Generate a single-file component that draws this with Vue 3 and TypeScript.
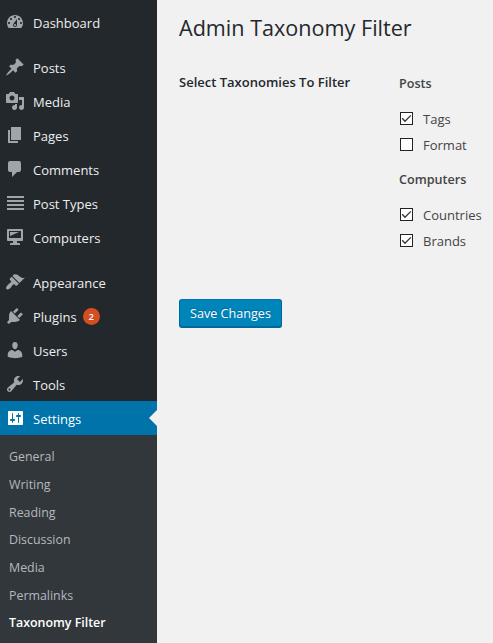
<script setup lang="ts">
import { reactive } from 'vue'

interface MenuItem {
  label: string
  icon: string
  count?: number
  current?: boolean
}

interface Group {
  title: string
  options: { label: string; checked: boolean }[]
}

const sections: MenuItem[][] = [
  [
    { label: 'Dashboard', icon: 'M3.76 16h12.48c1.1-1.37 1.76-3.11 1.76-5 0-4.42-3.58-8-8-8s-8 3.58-8 8c0 1.89.66 3.63 1.76 5zM10 4c.55 0 1 .45 1 1s-.45 1-1 1-1-.45-1-1 .45-1 1-1zM6 6c.55 0 1 .45 1 1s-.45 1-1 1-1-.45-1-1 .45-1 1-1zm8 0c.55 0 1 .45 1 1s-.45 1-1 1-1-.45-1-1 .45-1 1-1zm-5.37 5.55L12 7v6c0 1.1-.9 2-2 2s-2-.9-2-2c0-.57.24-1.08.63-1.45zM4 10c.55 0 1 .45 1 1s-.45 1-1 1-1-.45-1-1 .45-1 1-1zm12 0c.55 0 1 .45 1 1s-.45 1-1 1-1-.45-1-1 .45-1 1-1zm-5 3c0-.55-.45-1-1-1s-1 .45-1 1 .45 1 1 1 1-.45 1-1z' },
  ],
  [
    { label: 'Posts', icon: 'M10.44 3.02l1.82-1.82 6.36 6.35-1.83 1.82c-1.05-.68-2.48-.57-3.41.36l-.75.75c-.92.93-1.04 2.35-.35 3.41l-1.83 1.82-2.41-2.41-2.8 2.79c-.42.42-3.38 2.71-3.8 2.29s1.86-3.39 2.28-3.81l2.79-2.79L4.1 9.36l1.83-1.82c1.05.69 2.48.57 3.4-.36l.75-.75c.93-.92 1.05-2.35.36-3.41z' },
    { label: 'Media', icon: 'M13 11V4c0-.55-.45-1-1-1h-1.67L9 1H5L3.67 3H2c-.55 0-1 .45-1 1v7c0 .55.45 1 1 1h10c.55 0 1-.45 1-1zM7 4.5c1.38 0 2.5 1.12 2.5 2.5S8.38 9.5 7 9.5 4.5 8.38 4.5 7 5.62 4.5 7 4.5zM14 6h5v10.5c0 1.38-1.12 2.5-2.5 2.5S14 17.88 14 16.5s1.12-2.5 2.5-2.5c.17 0 .34.02.5.05V9h-3V6zm-4 8.05V13h2v3.5c0 1.38-1.12 2.5-2.5 2.5S7 17.88 7 16.5 8.12 14 9.5 14c.17 0 .34.02.5.05z' },
    { label: 'Pages', icon: 'M6 15V2h10v13H6zm-1 1h8v2H3V5h2v11z' },
    { label: 'Comments', icon: 'M5 2h9c1.1 0 2 .9 2 2v7c0 1.1-.9 2-2 2h-2l-5 5v-5H5c-1.1 0-2-.9-2-2V4c0-1.1.9-2 2-2z' },
    { label: 'Post Types', icon: 'M2 3h17v2H2zM2 7h17v2H2zM2 11h17v2H2zM2 15h17v2H2z' },
    { label: 'Computers', icon: 'M3 2h14c.55 0 1 .45 1 1v10c0 .55-.45 1-1 1h-5v2h2c.55 0 1 .45 1 1v1H5v-1c0-.55.45-1 1-1h2v-2H3c-.55 0-1-.45-1-1V3c0-.55.45-1 1-1zm13 9V4H4v7h12zM5 5h9L5 9V5z' },
  ],
  [
    { label: 'Appearance', icon: 'M14.48 11.06L7.41 3.99l1.5-1.5c.5-.56 2.3-.47 3.51.32 1.21.8 1.43 1.28 2.91 2.1 1.18.64 2.45 1.26 4.45.85zm-.71.71L6.7 4.7 4.93 6.47c-.39.39-.39 1.02 0 1.41l1.06 1.06c.39.39.39 1.03 0 1.42-.6.6-1.43 1.11-2.21 1.69-.35.26-.7.53-1.01.84C1.43 14.23.4 16.08 1.4 17.07c.99 1 2.84-.03 4.18-1.36.31-.31.58-.66.85-1.02.57-.78 1.08-1.61 1.69-2.21.39-.39 1.02-.39 1.41 0l1.06 1.06c.39.39 1.02.39 1.41 0z' },
    { label: 'Plugins', count: 2, icon: 'M13.11 4.36L9.87 7.6 8 5.73l3.24-3.24c.35-.34 1.05-.2 1.56.32.52.51.66 1.21.31 1.55zm-8 1.77l.91-1.12 9.01 9.01-1.19.84c-.71.71-2.63 1.16-3.82 1.16H6.14L4.9 17.26c-.59.59-1.54.59-2.12 0-.59-.58-.59-1.53 0-2.12l1.24-1.24v-3.88c0-1.13.4-3.19 1.09-3.89zm7.26 3.97l3.24-3.24c.34-.35 1.04-.21 1.55.31.52.51.66 1.21.31 1.55l-3.24 3.25z' },
    { label: 'Users', icon: 'M10 9.25c-2.27 0-2.73-3.44-2.73-3.44C7 4.02 7.82 2 9.97 2c2.16 0 2.98 2.02 2.71 3.81 0 0-.41 3.44-2.68 3.44zm0 2.57L12.72 10c2.39 0 4.52 2.33 4.52 4.53v2.49s-3.65 1.13-7.24 1.13c-3.65 0-7.24-1.13-7.24-1.13v-2.49c0-2.25 1.94-4.48 4.47-4.48z' },
    { label: 'Tools', icon: 'M16.68 9.77c-1.34 1.34-3.3 1.67-4.95.99l-5.41 6.52c-.99.99-2.59.99-3.58 0s-.99-2.59 0-3.57l6.52-5.42c-.68-1.65-.35-3.61.99-4.95 1.28-1.28 3.12-1.62 4.72-1.06l-2.89 2.89 2.82 2.82 2.86-2.87c.53 1.58.18 3.39-1.08 4.65zM3.81 16.21c.4.39 1.04.39 1.43 0 .4-.4.4-1.04 0-1.43-.39-.4-1.03-.4-1.43 0-.39.39-.39 1.03 0 1.43z' },
    { label: 'Settings', current: true, icon: 'M18 16V4c0-.55-.45-1-1-1H3.6c-.3 0-.6.3-.6.6v12.8c0 .3.3.6.6.6H17c.55 0 1-.45 1-1zM8 11h1c.55 0 1 .45 1 1s-.45 1-1 1H8v1.5c0 .28-.22.5-.5.5s-.5-.22-.5-.5V13H6c-.55 0-1-.45-1-1s.45-1 1-1h1V5.5c0-.28.22-.5.5-.5s.5.22.5.5V11zm5-2h-1c-.55 0-1-.45-1-1s.45-1 1-1h1V5.5c0-.28.22-.5.5-.5s.5.22.5.5V7h1c.55 0 1 .45 1 1s-.45 1-1 1h-1v5.5c0 .28-.22.5-.5.5s-.5-.22-.5-.5V9z' },
  ],
]

const submenu = ['General', 'Writing', 'Reading', 'Discussion', 'Media', 'Permalinks', 'Taxonomy Filter']
const activeSub = 'Taxonomy Filter'

const groups = reactive<Group[]>([
  { title: 'Posts', options: [{ label: 'Tags', checked: true }, { label: 'Format', checked: false }] },
  { title: 'Computers', options: [{ label: 'Countries', checked: true }, { label: 'Brands', checked: true }] },
])
</script>

<template>
  <div class="admin">
    <nav class="sidebar">
      <ul v-for="(section, i) in sections" :key="i" class="section">
        <li v-for="item in section" :key="item.label" class="item" :class="{ current: item.current }">
          <svg class="icon" viewBox="0 0 20 20" aria-hidden="true"><path :d="item.icon" fill-rule="evenodd" /></svg>
          <span>{{ item.label }}</span>
          <span v-if="item.count" class="count">{{ item.count }}</span>
        </li>
      </ul>
      <ul class="submenu">
        <li v-for="name in submenu" :key="name" :class="{ active: name === activeSub }">{{ name }}</li>
      </ul>
    </nav>

    <main class="content">
      <h1>Admin Taxonomy Filter</h1>
      <div class="form-row">
        <div class="form-label">Select Taxonomies To Filter</div>
        <div class="fields">
          <section v-for="group in groups" :key="group.title" class="group">
            <h2>{{ group.title }}</h2>
            <label v-for="option in group.options" :key="option.label" class="option">
              <input v-model="option.checked" type="checkbox" />
              <span class="box">
                <svg v-if="option.checked" viewBox="0 0 11 11" aria-hidden="true"><path d="M1.2 5.3 4 8.2 9.8 2.4" /></svg>
              </span>
              <span>{{ option.label }}</span>
            </label>
          </section>
        </div>
      </div>
      <button type="button" class="save">Save Changes</button>
    </main>
  </div>
</template>

<style>
body {
  margin: 0;
  overflow: hidden;
}
</style>

<style scoped>
.admin {
  display: flex;
  height: 643px;
  overflow: hidden;
  background: #f1f1f1;
  color: #444;
  font-family: 'Open Sans', 'Noto Sans', sans-serif;
  font-size: 12.4px;
}

ul {
  list-style: none;
  margin: 0;
  padding: 0;
}

.sidebar {
  flex: none;
  width: 157px;
  box-sizing: border-box;
  padding-top: 5px;
  display: flex;
  flex-direction: column;
  background: #23282d;
}

.section + .section {
  margin-top: 11px;
}

.item {
  position: relative;
  display: flex;
  align-items: center;
  box-sizing: border-box;
  height: 34px;
  padding: 2px 0 0 5px;
  color: #eee;
  font-size: 13px;
}

.icon {
  width: 20px;
  height: 20px;
  margin: 0 8px 2px 0;
  fill: #a0a5aa;
}

.current {
  background: #0073aa;
  color: #fff;
}

.current .icon {
  fill: #fff;
}

.current::after {
  content: '';
  position: absolute;
  right: 0;
  top: 9px;
  border: 8px solid transparent;
  border-left-width: 0;
  border-right-color: #f1f1f1;
}

.count {
  width: 17px;
  height: 17px;
  margin: 0 0 1px 6px;
  border-radius: 50%;
  background: #d54e21;
  color: #fff;
  font-size: 9.5px;
  font-weight: 600;
  line-height: 17px;
  text-align: center;
}

.submenu {
  flex: 1;
  padding-top: 8.3px;
  background: #32373c;
  color: #b4b9be;
}

.submenu li {
  height: 27.7px;
  padding-left: 9px;
  line-height: 27.7px;
}

.submenu .active {
  color: #fff;
  font-weight: 600;
}

.content {
  flex: 1;
  padding: 11px 0 0 22px;
}

h1 {
  margin: 0;
  color: #23282d;
  font-size: 21.6px;
  font-weight: 400;
  line-height: 34px;
  white-space: nowrap;
}

.form-row {
  display: flex;
  height: 226px;
  padding-top: 28px;
}

.form-label {
  width: 220px;
  color: #23282d;
  font-size: 13px;
  font-weight: 600;
  line-height: 18px;
}

.group {
  height: 96px;
}

h2 {
  margin: 0 0 12px;
  font-size: 12.6px;
  font-weight: 600;
  line-height: 21px;
}

.option {
  display: flex;
  align-items: center;
  height: 26.3px;
  font-size: 13px;
}

.option input {
  position: absolute;
  opacity: 0;
  pointer-events: none;
}

.box {
  width: 13px;
  height: 13px;
  box-sizing: border-box;
  margin: 0 10px 1px 1px;
  border: 1px solid #222;
  background: #fff;
}

.box svg {
  display: block;
  width: 11px;
  height: 11px;
  fill: none;
  stroke: #333;
  stroke-width: 1.3;
}

.save {
  display: block;
  box-sizing: border-box;
  width: 103px;
  height: 29px;
  padding: 0;
  border: 1px solid #006799;
  border-color: #0073aa #006799 #006799;
  border-radius: 3px;
  background: #0085ba;
  box-shadow: inset 0 -1px 0 #006799;
  color: #fff;
  font: inherit;
  font-size: 12.6px;
  text-shadow: 0 -1px 1px #006799;
}
</style>
